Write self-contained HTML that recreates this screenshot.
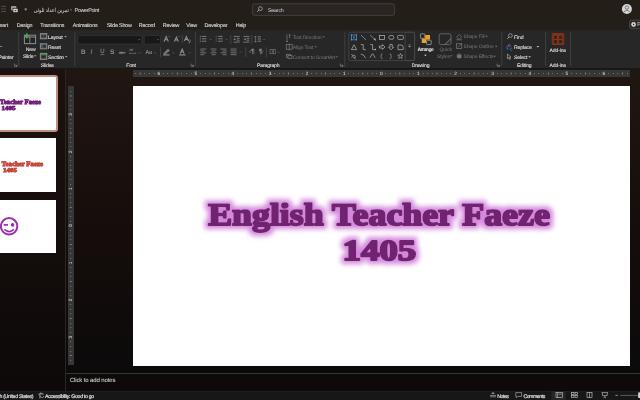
<!DOCTYPE html>
<html><head><meta charset="utf-8">
<style>
*{margin:0;padding:0;box-sizing:border-box}
html,body{width:640px;height:400px;overflow:hidden;background:#1a1411;font-family:"Liberation Sans",sans-serif;color:#e8e8e8}
.a{position:absolute}
svg{font-family:"Liberation Sans",sans-serif;will-change:transform;text-rendering:geometricPrecision}
#title{left:0;top:0;width:640px;height:30px;background:#241e19}
#ribbon{left:0;top:30px;width:640px;height:39px;background:#272727;border-bottom:0.5px solid #1a1614}
#canvas{left:66px;top:69px;width:574px;height:304px;background:linear-gradient(#201713,#150d0b 55%,#0b0a0a)}
#left{left:0;top:69px;width:65px;height:322px;background:linear-gradient(#1b120f,#0d0909)}
#sep{left:65px;top:69px;width:1px;height:322px;background:#2c2623}
#notes{left:66px;top:373px;width:574px;height:18px;background:#0e0a0a;border-top:1px solid #3a3433}
#status{left:0;top:391px;width:640px;height:9px;background:#171717;border-top:1px solid #1f1f1f}
#slide{left:133px;top:86px;width:497px;height:280px;background:#fff}
#hruler{left:133px;top:70px;width:497px;height:7px;background:#373737}
#vruler{left:67.5px;top:86px;width:6.5px;height:279px;background:#373737}
.thumb{position:absolute;left:-40px;width:96px;height:54px;background:#fff}
</style></head><body>
<div id="title" class="a"></div>
<div id="ribbon" class="a"></div>
<div id="canvas" class="a"></div>
<div id="left" class="a"></div>
<div id="sep" class="a"></div>
<div id="notes" class="a"></div>
<div id="status" class="a"></div>
<div id="hruler" class="a"></div>
<div id="vruler" class="a"></div>
<div id="slide" class="a"></div>

<svg class="a" style="left:0;top:0" width="640" height="400" viewBox="0 0 640 400">
<!-- title bar -->
<g fill="none">
<line x1="1" y1="6.4" x2="6" y2="6.4" stroke="#5e5854" stroke-width="0.8"/>
<line x1="1" y1="9" x2="6" y2="9" stroke="#5e5854" stroke-width="0.8"/>
<line x1="1" y1="11.5" x2="6" y2="11.5" stroke="#5e5854" stroke-width="0.8"/>
</g>
<rect x="11" y="6" width="5.4" height="4.6" rx="0.8" fill="#9a9693"/>
<rect x="13" y="8.4" width="5" height="4" fill="#dcdad8" stroke="#1f1a16" stroke-width="0.6"/>
<rect x="14.6" y="10.2" width="1.8" height="1" fill="#1f1a16"/>
<path d="M24.2 8.6 h3 l-1.5 2.4 z" fill="#9d9995"/>
<text x="33.8" y="11.8" font-size="5.6" fill="#e4e2e0" textLength="35" lengthAdjust="spacingAndGlyphs">تمرین اعداد ثلوثی</text>
<rect x="70.4" y="9.6" width="1.4" height="0.6" fill="#d8d6d4"/>
<text x="74.4" y="11.8" font-size="5.5" fill="#e4e2e0" letter-spacing="-0.35">PowerPoint</text>
<rect x="252.4" y="3.8" width="142.2" height="11.6" rx="2.4" fill="#2a2522" stroke="#4a4643" stroke-width="0.8"/>
<circle cx="260.4" cy="8.6" r="1.9" fill="none" stroke="#cfcfcf" stroke-width="0.6"/>
<line x1="259.1" y1="9.9" x2="257.2" y2="11.8" stroke="#cfcfcf" stroke-width="0.7"/>
<text x="268" y="11.6" font-size="5.3" fill="#d4d4d4" letter-spacing="-0.2">Search</text>
<circle cx="626.9" cy="9" r="5" fill="#d6d6d6"/>
<circle cx="626.9" cy="7.6" r="1.7" fill="none" stroke="#3a3a3a" stroke-width="0.6"/>
<path d="M623.6 12.2 Q626.9 8.6 630.2 12.2" fill="none" stroke="#3a3a3a" stroke-width="0.6"/>
<rect x="629.6" y="20.2" width="14" height="8.6" rx="2" fill="#2a2522" stroke="#55514e" stroke-width="0.8"/>
<circle cx="633.6" cy="24.5" r="2.4" fill="#d0d0d0"/>
<path d="M633.0 23.4 v2.2 l1.6 -1.1 z" fill="#2a2522"/>
<text x="637.2" y="26.4" font-size="5.3" fill="#e0e0e0">P</text>
<text x="-4.3" y="26.6" font-size="5.4" fill="#e4e2e0" stroke="#e4e2e0" stroke-width="0.06" letter-spacing="-0.2" font-weight="normal" text-anchor="start" >Insert</text>
<text x="16.7" y="26.6" font-size="5.4" fill="#e4e2e0" stroke="#e4e2e0" stroke-width="0.06" letter-spacing="-0.2" font-weight="normal" text-anchor="start" >Design</text>
<text x="40.3" y="26.6" font-size="5.4" fill="#e4e2e0" stroke="#e4e2e0" stroke-width="0.06" letter-spacing="-0.2" font-weight="normal" text-anchor="start" >Transitions</text>
<text x="72.8" y="26.6" font-size="5.4" fill="#e4e2e0" stroke="#e4e2e0" stroke-width="0.06" letter-spacing="-0.2" font-weight="normal" text-anchor="start" >Animations</text>
<text x="106.8" y="26.6" font-size="5.4" fill="#e4e2e0" stroke="#e4e2e0" stroke-width="0.06" letter-spacing="-0.2" font-weight="normal" text-anchor="start" >Slide Show</text>
<text x="138.7" y="26.6" font-size="5.4" fill="#e4e2e0" stroke="#e4e2e0" stroke-width="0.06" letter-spacing="-0.2" font-weight="normal" text-anchor="start" >Record</text>
<text x="162.8" y="26.6" font-size="5.4" fill="#e4e2e0" stroke="#e4e2e0" stroke-width="0.06" letter-spacing="-0.2" font-weight="normal" text-anchor="start" >Review</text>
<text x="186.2" y="26.6" font-size="5.4" fill="#e4e2e0" stroke="#e4e2e0" stroke-width="0.06" letter-spacing="-0.2" font-weight="normal" text-anchor="start" >View</text>
<text x="204.5" y="26.6" font-size="5.4" fill="#e4e2e0" stroke="#e4e2e0" stroke-width="0.06" letter-spacing="-0.2" font-weight="normal" text-anchor="start" >Developer</text>
<text x="235.7" y="26.6" font-size="5.4" fill="#e4e2e0" stroke="#e4e2e0" stroke-width="0.06" letter-spacing="-0.2" font-weight="normal" text-anchor="start" >Help</text>
<text x="-1.6" y="58.6" font-size="5.1" fill="#e2e2e2" stroke="#e2e2e2" stroke-width="0.09" letter-spacing="-0.15" font-weight="normal" text-anchor="start" >Painter</text>
<line x1="0" y1="46.5" x2="2.2" y2="46.5" stroke="#c8c8c8" stroke-width="0.6"/>
<path d="M14.4 63.6 v2.6 h2.6" fill="none" stroke="#9a9a9a" stroke-width="0.5"/>
<path d="M15.4 64.6 l1.6 1.6 M15.6 66.2 h1.4 v-1.4" fill="none" stroke="#9a9a9a" stroke-width="0.5"/>
<line x1="18.7" y1="32" x2="18.7" y2="66" stroke="#454545" stroke-width="0.8"/>
<rect x="24.4" y="35.2" width="11.2" height="8.4" rx="0" fill="#232323" stroke="#8e8e8e" stroke-width="1.0"/>
<line x1="24.4" y1="37.0" x2="35.6" y2="37.0" stroke="#8e8e8e" stroke-width="1.0"/>
<line x1="29.8" y1="37.0" x2="29.8" y2="43.6" stroke="#8e8e8e" stroke-width="0.9"/>
<line x1="26.8" y1="33.2" x2="26.8" y2="38.6" stroke="#4caa55" stroke-width="1.5"/>
<line x1="24.1" y1="35.9" x2="29.5" y2="35.9" stroke="#4caa55" stroke-width="1.5"/>
<text x="25.7" y="51.3" font-size="5.1" fill="#e2e2e2" stroke="#e2e2e2" stroke-width="0.09" letter-spacing="-0.15" font-weight="normal" text-anchor="start" >New</text>
<text x="22.9" y="57.7" font-size="5.1" fill="#e2e2e2" stroke="#e2e2e2" stroke-width="0.09" letter-spacing="-0.15" font-weight="normal" text-anchor="start" >Slide</text>
<path d="M33.900000000000006 55.199999999999996 L35.2 56.699999999999996 L36.5 55.199999999999996 z" fill="#a8a8a8"/>
<rect x="40.4" y="33.6" width="6.4" height="5.2" rx="0" fill="#5a5a5a" stroke="#8a8a8a" stroke-width="1.0"/>
<rect x="41.6" y="35.4" width="1.7" height="1.8" rx="0" fill="#262626"/>
<rect x="43.9" y="35.4" width="1.7" height="1.8" rx="0" fill="#262626"/>
<text x="48.1" y="38.5" font-size="5.1" fill="#e2e2e2" stroke="#e2e2e2" stroke-width="0.09" letter-spacing="-0.15" font-weight="normal" text-anchor="start" >Layout</text>
<path d="M64.2 36.0 L65.5 37.5 L66.8 36.0 z" fill="#a8a8a8"/>
<rect x="40.4" y="43.8" width="6.4" height="5.0" rx="0" fill="#4a4a4a" stroke="#8a8a8a" stroke-width="1.0"/>
<rect x="42.2" y="45.6" width="3.4" height="1.6" rx="0" fill="#262626"/>
<path d="M40.6 44.6 q0.8 -1.6 2.2 -0.6" fill="none" stroke="#3b8fe0" stroke-width="0.9"/>
<path d="M41.6 45.4 l1.2 1.4" fill="none" stroke="#3b8fe0" stroke-width="0.9"/>
<text x="48.1" y="48.5" font-size="5.1" fill="#e2e2e2" stroke="#e2e2e2" stroke-width="0.09" letter-spacing="-0.15" font-weight="normal" text-anchor="start" >Reset</text>
<rect x="40.4" y="53.8" width="6.4" height="5.6" rx="0" fill="#4a4a4a" stroke="#8a8a8a" stroke-width="1.0"/>
<line x1="39.9" y1="53.6" x2="47.3" y2="53.6" stroke="#4caa55" stroke-width="1.4"/>
<rect x="41.8" y="55.8" width="3.6" height="1.8" rx="0" fill="#262626"/>
<text x="48.1" y="58.5" font-size="5.1" fill="#e2e2e2" stroke="#e2e2e2" stroke-width="0.09" letter-spacing="-0.15" font-weight="normal" text-anchor="start" >Section</text>
<path d="M64.9 56.0 L66.2 57.5 L67.5 56.0 z" fill="#a8a8a8"/>
<text x="40.8" y="67.1" font-size="5.1" fill="#e2e2e2" stroke="#e2e2e2" stroke-width="0.09" letter-spacing="-0.15" font-weight="normal" text-anchor="start" >Slides</text>
<line x1="74.8" y1="32" x2="74.8" y2="66" stroke="#454545" stroke-width="0.8"/>
<rect x="78" y="35.6" width="63.8" height="8.4" rx="1.4" fill="#181818" stroke="#3a3a3a" stroke-width="0.6"/>
<line x1="138.4" y1="39.6" x2="140" y2="39.6" stroke="#888" stroke-width="0.6"/>
<rect x="144.2" y="35.6" width="16.2" height="8.4" rx="1.4" fill="#181818" stroke="#3a3a3a" stroke-width="0.6"/>
<line x1="157.2" y1="39.6" x2="158.8" y2="39.6" stroke="#888" stroke-width="0.6"/>
<path d="M164 41.6 L166.2 36.6 L168.4 41.6 M164.8 39.800000000000004 H167.6" fill="none" stroke="#909090" stroke-width="1.05"/>
<path d="M168.6 36.4 h1.6" fill="none" stroke="#909090" stroke-width="0.5"/>
<path d="M174.4 41.6 L176.38 37.1 L178.36 41.6 M175.12 39.980000000000004 H177.64000000000001" fill="none" stroke="#909090" stroke-width="1.05"/>
<path d="M178.4 36.4 h1.4" fill="none" stroke="#909090" stroke-width="0.5"/>
<line x1="182.4" y1="35.2" x2="182.4" y2="43.2" stroke="#555" stroke-width="0.6"/>
<path d="M184.4 41 L186.38 36.5 L188.36 41 M185.12 39.38 H187.64000000000001" fill="none" stroke="#909090" stroke-width="1.05"/>
<path d="M187.8 40.4 q1.8 -1.2 2.8 0.6 q-0.6 1.6 -2 1.4 M189.4 42 v1.4" fill="none" stroke="#909090" stroke-width="0.7"/>
<text x="81" y="54" font-size="6.4" fill="#8e8e8e" stroke="#8e8e8e" stroke-width="0" letter-spacing="0" font-weight="bold" text-anchor="start" >B</text>
<text x="90.6" y="54" font-size="6.4" fill="#8e8e8e" stroke="#8e8e8e" stroke-width="0.09" letter-spacing="0" font-weight="normal" text-anchor="start" font-style="italic">I</text>
<text x="100.2" y="53.4" font-size="6.0" fill="#8e8e8e" stroke="#8e8e8e" stroke-width="0.09" letter-spacing="0" font-weight="normal" text-anchor="start" >U</text>
<line x1="100.2" y1="54.6" x2="104.4" y2="54.6" stroke="#8e8e8e" stroke-width="0.6"/>
<text x="110" y="54" font-size="6.6" fill="#8e8e8e" stroke="#8e8e8e" stroke-width="0" letter-spacing="0" font-weight="bold" text-anchor="start" >S</text>
<text x="119.0" y="53.8" font-size="3.8" fill="#8e8e8e" stroke="#8e8e8e" stroke-width="0.09" letter-spacing="-0.25" font-weight="normal" text-anchor="start" >abc</text>
<line x1="118.8" y1="52.4" x2="125.6" y2="52.4" stroke="#8e8e8e" stroke-width="0.6"/>
<text x="129.2" y="51.4" font-size="3.4" fill="#8e8e8e" stroke="#8e8e8e" stroke-width="0.09" letter-spacing="-0.1" font-weight="normal" text-anchor="start" >AV</text>
<path d="M129.2 53.4 h7 M129.2 53.4 l1 -0.8 M136.2 53.4 l-1 -0.8" fill="none" stroke="#8e8e8e" stroke-width="0.5"/>
<path d="M138.5 52.3 L139.6 53.4 L140.7 52.3" fill="none" stroke="#707070" stroke-width="0.5"/>
<text x="145.4" y="54" font-size="5.6" fill="#8e8e8e" stroke="#8e8e8e" stroke-width="0.09" letter-spacing="-0.2" font-weight="normal" text-anchor="start" >Aa</text>
<path d="M154.1 52.3 L155.2 53.4 L156.29999999999998 52.3" fill="none" stroke="#707070" stroke-width="0.5"/>
<line x1="160.6" y1="47.2" x2="160.6" y2="57.2" stroke="#555" stroke-width="0.6"/>
<path d="M163.8 53.4 l4.2 -4.2 l1.4 1.4 l-4.2 3.4 z" fill="#707070" stroke="#909090" stroke-width="0.7"/>
<line x1="163.0" y1="54.9" x2="169.6" y2="54.9" stroke="#8a8a8a" stroke-width="1.2"/>
<path d="M172.3 52.3 L173.4 53.4 L174.5 52.3" fill="none" stroke="#707070" stroke-width="0.5"/>
<path d="M180.2 53.6 L182.17999999999998 49.1 L184.16 53.6 M180.92 51.980000000000004 H183.44" fill="none" stroke="#909090" stroke-width="1.05"/>
<line x1="179.2" y1="54.9" x2="185.6" y2="54.9" stroke="#8a8a8a" stroke-width="1.2"/>
<path d="M188.5 52.3 L189.6 53.4 L190.7 52.3" fill="none" stroke="#707070" stroke-width="0.5"/>
<text x="126.2" y="67.1" font-size="5.1" fill="#e2e2e2" stroke="#e2e2e2" stroke-width="0.09" letter-spacing="-0.15" font-weight="normal" text-anchor="start" >Font</text>
<path d="M191.0 63.6 v2.6 h2.6" fill="none" stroke="#9a9a9a" stroke-width="0.5"/>
<path d="M192.0 64.6 l1.6 1.6 M192.2 66.2 h1.4 v-1.4" fill="none" stroke="#9a9a9a" stroke-width="0.5"/>
<line x1="195.6" y1="32" x2="195.6" y2="66" stroke="#454545" stroke-width="0.8"/>
<rect x="199.8" y="35.9" width="1.0" height="1.0" rx="0" fill="#909090"/>
<line x1="201.8" y1="36.4" x2="206.4" y2="36.4" stroke="#909090" stroke-width="0.8"/>
<rect x="199.8" y="38.3" width="1.0" height="1.0" rx="0" fill="#909090"/>
<line x1="201.8" y1="38.8" x2="206.4" y2="38.8" stroke="#909090" stroke-width="0.8"/>
<rect x="199.8" y="40.699999999999996" width="1.0" height="1.0" rx="0" fill="#909090"/>
<line x1="201.8" y1="41.199999999999996" x2="206.4" y2="41.199999999999996" stroke="#909090" stroke-width="0.8"/>
<path d="M209.5 38.9 L210.6 40.0 L211.7 38.9" fill="none" stroke="#707070" stroke-width="0.5"/>
<line x1="216.2" y1="35.8" x2="216.2" y2="37.0" stroke="#909090" stroke-width="0.6"/>
<line x1="218.2" y1="36.4" x2="222.6" y2="36.4" stroke="#909090" stroke-width="0.8"/>
<line x1="216.2" y1="38.199999999999996" x2="216.2" y2="39.4" stroke="#909090" stroke-width="0.6"/>
<line x1="218.2" y1="38.8" x2="222.6" y2="38.8" stroke="#909090" stroke-width="0.8"/>
<line x1="216.2" y1="40.599999999999994" x2="216.2" y2="41.8" stroke="#909090" stroke-width="0.6"/>
<line x1="218.2" y1="41.199999999999996" x2="222.6" y2="41.199999999999996" stroke="#909090" stroke-width="0.8"/>
<path d="M225.5 38.9 L226.6 40.0 L227.7 38.9" fill="none" stroke="#707070" stroke-width="0.5"/>
<line x1="230.8" y1="35" x2="230.8" y2="43.8" stroke="#555" stroke-width="0.6"/>
<line x1="233.6" y1="36.4" x2="239.6" y2="36.4" stroke="#909090" stroke-width="0.75"/>
<line x1="236.79999999999998" y1="38.3" x2="239.6" y2="38.3" stroke="#909090" stroke-width="0.75"/>
<line x1="236.79999999999998" y1="40.199999999999996" x2="239.6" y2="40.199999999999996" stroke="#909090" stroke-width="0.75"/>
<line x1="233.6" y1="42.1" x2="239.6" y2="42.1" stroke="#909090" stroke-width="0.75"/>
<line x1="233.79999999999998" y1="39.25" x2="236.2" y2="39.25" stroke="#909090" stroke-width="0.6"/>
<path d="M233.6 39.25 l1.3 -1.0 v2.0 z" fill="#909090"/>
<line x1="243.4" y1="36.4" x2="249.4" y2="36.4" stroke="#909090" stroke-width="0.75"/>
<line x1="246.6" y1="38.3" x2="249.4" y2="38.3" stroke="#909090" stroke-width="0.75"/>
<line x1="246.6" y1="40.199999999999996" x2="249.4" y2="40.199999999999996" stroke="#909090" stroke-width="0.75"/>
<line x1="243.4" y1="42.1" x2="249.4" y2="42.1" stroke="#909090" stroke-width="0.75"/>
<line x1="243.6" y1="39.25" x2="246.0" y2="39.25" stroke="#909090" stroke-width="0.6"/>
<path d="M246.20000000000002 39.25 l-1.3 -1.0 v2.0 z" fill="#909090"/>
<line x1="251.8" y1="35" x2="251.8" y2="43.8" stroke="#555" stroke-width="0.6"/>
<path d="M255.4 36.2 v6 M254.4 37.2 l1 -1 l1 1 M254.4 41.2 l1 1 l1 -1" fill="none" stroke="#909090" stroke-width="0.6"/>
<line x1="257.6" y1="36.8" x2="261" y2="36.8" stroke="#909090" stroke-width="0.8"/>
<line x1="257.6" y1="39.0" x2="261" y2="39.0" stroke="#909090" stroke-width="0.8"/>
<line x1="257.6" y1="41.199999999999996" x2="261" y2="41.199999999999996" stroke="#909090" stroke-width="0.8"/>
<path d="M263.09999999999997 38.9 L264.2 40.0 L265.3 38.9" fill="none" stroke="#707070" stroke-width="0.5"/>
<line x1="200.4" y1="49.0" x2="206.4" y2="49.0" stroke="#909090" stroke-width="0.7"/>
<line x1="200.4" y1="50.9" x2="204.4" y2="50.9" stroke="#909090" stroke-width="0.7"/>
<line x1="200.4" y1="52.8" x2="206.4" y2="52.8" stroke="#909090" stroke-width="0.7"/>
<line x1="200.4" y1="54.7" x2="204.4" y2="54.7" stroke="#909090" stroke-width="0.7"/>
<line x1="210.6" y1="49.0" x2="216.6" y2="49.0" stroke="#909090" stroke-width="0.7"/>
<line x1="211.6" y1="50.9" x2="215.6" y2="50.9" stroke="#909090" stroke-width="0.7"/>
<line x1="210.6" y1="52.8" x2="216.6" y2="52.8" stroke="#909090" stroke-width="0.7"/>
<line x1="211.6" y1="54.7" x2="215.6" y2="54.7" stroke="#909090" stroke-width="0.7"/>
<line x1="220.6" y1="49.0" x2="226.6" y2="49.0" stroke="#909090" stroke-width="0.7"/>
<line x1="222.6" y1="50.9" x2="226.6" y2="50.9" stroke="#909090" stroke-width="0.7"/>
<line x1="220.6" y1="52.8" x2="226.6" y2="52.8" stroke="#909090" stroke-width="0.7"/>
<line x1="222.6" y1="54.7" x2="226.6" y2="54.7" stroke="#909090" stroke-width="0.7"/>
<line x1="230.6" y1="49.0" x2="236.6" y2="49.0" stroke="#909090" stroke-width="0.7"/>
<line x1="230.6" y1="50.9" x2="236.6" y2="50.9" stroke="#909090" stroke-width="0.7"/>
<line x1="230.6" y1="52.8" x2="236.6" y2="52.8" stroke="#909090" stroke-width="0.7"/>
<line x1="230.6" y1="54.7" x2="236.6" y2="54.7" stroke="#909090" stroke-width="0.7"/>
<path d="M239.3 51.7 L240.4 52.800000000000004 L241.5 51.7" fill="none" stroke="#707070" stroke-width="0.5"/>
<line x1="245.8" y1="47.2" x2="245.8" y2="57" stroke="#555" stroke-width="0.6"/>
<path d="M249.2 51.6 l1.6 -1.2 M249.2 51.6 l1.6 1.2" fill="none" stroke="#909090" stroke-width="0.6"/>
<path d="M251.6 49 h2.2 v5.2 M252.6 49 v5.2" fill="none" stroke="#909090" stroke-width="0.6"/>
<rect x="251.4" y="49.2" width="1.4" height="2" rx="0" fill="#909090"/>
<path d="M259.4 49 h2.2 v5.2 M260.4 49 v5.2" fill="none" stroke="#909090" stroke-width="0.6"/>
<rect x="259.2" y="49.2" width="1.4" height="2" rx="0" fill="#909090"/>
<path d="M263 51.6 l-1 -1.0 M263 51.6 l-1 1.0" fill="none" stroke="#909090" stroke-width="0.6"/>
<line x1="266.4" y1="47.2" x2="266.4" y2="57" stroke="#555" stroke-width="0.6"/>
<rect x="270" y="49.4" width="2.2" height="4.4" rx="0" fill="none" stroke="#7a7a7a" stroke-width="0.6"/>
<rect x="273.4" y="49.4" width="2.2" height="4.4" rx="0" fill="none" stroke="#7a7a7a" stroke-width="0.6"/>
<path d="M277.5 51.7 L278.6 52.800000000000004 L279.70000000000005 51.7" fill="none" stroke="#707070" stroke-width="0.5"/>
<path d="M287 34.4 v7.6 M286 41 l1 1 l1 -1 M289.6 34.4 v4 M288.8 35.4 l0.8 -1 l0.8 1" fill="none" stroke="#8a8a8a" stroke-width="0.6"/>
<text x="292.8" y="38.6" font-size="5.1" fill="#767676" stroke="#767676" stroke-width="0" letter-spacing="-0.15" font-weight="normal" text-anchor="start" >Text Direction</text>
<path d="M322.3 36.199999999999996 L323.6 37.699999999999996 L324.90000000000003 36.199999999999996 z" fill="#6a6a6a"/>
<rect x="286.2" y="44.6" width="6" height="4.6" rx="0" fill="none" stroke="#8a8a8a" stroke-width="0.6"/>
<line x1="289.2" y1="43.6" x2="289.2" y2="50.2" stroke="#8a8a8a" stroke-width="0.6"/>
<text x="292.8" y="48.6" font-size="5.1" fill="#767676" stroke="#767676" stroke-width="0" letter-spacing="-0.15" font-weight="normal" text-anchor="start" >Align Text</text>
<path d="M314.5 46.199999999999996 L315.8 47.699999999999996 L317.1 46.199999999999996 z" fill="#6a6a6a"/>
<rect x="286.4" y="54.2" width="4" height="3" rx="0" fill="none" stroke="#8a8a8a" stroke-width="0.6"/>
<rect x="288" y="55.6" width="4" height="3" rx="0" fill="#2a2a2a" stroke="#8a8a8a" stroke-width="0.6"/>
<text x="292.8" y="58.6" font-size="5.1" fill="#767676" stroke="#767676" stroke-width="0" letter-spacing="-0.15" font-weight="normal" text-anchor="start" >Convert to SmartArt</text>
<path d="M335.5 56.199999999999996 L336.8 57.699999999999996 L338.1 56.199999999999996 z" fill="#6a6a6a"/>
<text x="257.0" y="67.1" font-size="5.1" fill="#e2e2e2" stroke="#e2e2e2" stroke-width="0.09" letter-spacing="-0.15" font-weight="normal" text-anchor="start" >Paragraph</text>
<path d="M340.4 63.6 v2.6 h2.6" fill="none" stroke="#9a9a9a" stroke-width="0.5"/>
<path d="M341.4 64.6 l1.6 1.6 M341.59999999999997 66.2 h1.4 v-1.4" fill="none" stroke="#9a9a9a" stroke-width="0.5"/>
<line x1="344.8" y1="32" x2="344.8" y2="67" stroke="#454545" stroke-width="0.8"/>
<rect x="348.8" y="32.2" width="65.8" height="28.4" rx="2" fill="none" stroke="#4e4e4e" stroke-width="0.7"/>
<rect x="405.2" y="32.2" width="9.4" height="28.4" rx="1.5" fill="none" stroke="#4e4e4e" stroke-width="0.7"/>
<path d="M408.3 44.9 h2.6" fill="none" stroke="#aaaaaa" stroke-width="0.5"/>
<path d="M408.3 46.0 h2.6 l-1.3 1.5 z" fill="#aaaaaa"/>
<rect x="351.4" y="35.0" width="5" height="4.8" rx="0" fill="none" stroke="#4aa0e6" stroke-width="0.7"/>
<rect x="353.2" y="36.6" width="1.4" height="1.6" rx="0" fill="#4aa0e6"/>
<rect x="350.79999999999995" y="34.4" width="1.2" height="1.2" rx="0" fill="#4aa0e6"/>
<rect x="355.79999999999995" y="34.4" width="1.2" height="1.2" rx="0" fill="#4aa0e6"/>
<rect x="350.79999999999995" y="39.199999999999996" width="1.2" height="1.2" rx="0" fill="#4aa0e6"/>
<rect x="355.79999999999995" y="39.199999999999996" width="1.2" height="1.2" rx="0" fill="#4aa0e6"/>
<line x1="361" y1="35" x2="366" y2="40" stroke="#b8b8b8" stroke-width="0.6"/>
<line x1="370.2" y1="35" x2="375.4" y2="40" stroke="#b8b8b8" stroke-width="0.6"/>
<path d="M374 39.6 l1.6 0.6 l-0.6 -1.6 z" fill="#b8b8b8" stroke="#b8b8b8" stroke-width="0.5"/>
<rect x="379.4" y="35.4" width="5.2" height="4" rx="0" fill="none" stroke="#b8b8b8" stroke-width="0.7"/>
<path d="M388.6 37.4 l1 -1.8 h3.4 l1 1.8 l-1 1.8 h-3.4 z" fill="none" stroke="#b8b8b8" stroke-width="0.7"/>
<rect x="397.6" y="35.4" width="5.8" height="4" rx="1" fill="none" stroke="#b8b8b8" stroke-width="0.7"/>
<path d="M351.4 49.6 l2.6 -4.8 l2.6 4.8 z" fill="none" stroke="#b8b8b8" stroke-width="0.7"/>
<path d="M360.8 44.6 h2.4 v5 h2.6" fill="none" stroke="#b8b8b8" stroke-width="0.7"/>
<path d="M370.2 44.6 h2.4 v5 h2.6" fill="none" stroke="#b8b8b8" stroke-width="0.7"/>
<rect x="374.8" y="48.8" width="1.2" height="1.4" rx="0" fill="#b8b8b8"/>
<path d="M379.4 46 h3 v-1.4 l2.6 2.4 l-2.6 2.4 v-1.4 h-3 z" fill="none" stroke="#b8b8b8" stroke-width="0.7"/>
<path d="M390 44.4 h2.2 v2.8 h1.4 l-2.5 2.6 l-2.5 -2.6 h1.4 z" fill="none" stroke="#b8b8b8" stroke-width="0.7"/>
<path d="M398 49.6 v-4.6 h3 q2.2 0 2.2 2.2 v2.4 z" fill="none" stroke="#b8b8b8" stroke-width="0.7"/>
<path d="M351.4 54 l2.4 2.6 M351.6 57.6 q1.4 -3.4 3 -2.4 q1.6 1 0.4 2.6 q-1 0.8 -1.6 -0.4 l2.4 1.8" fill="none" stroke="#b8b8b8" stroke-width="0.6"/>
<path d="M360.8 54.2 q3.6 0 4.8 4" fill="none" stroke="#b8b8b8" stroke-width="0.7"/>
<path d="M370 57.8 l2 -3.6 q0.6 -0.6 1.2 0 l2 3.6" fill="none" stroke="#b8b8b8" stroke-width="0.7"/>
<path d="M382.4 53.8 q-1.2 0 -1.2 1.2 v0.6 l-0.6 0.6 l0.6 0.6 v0.6 q0 1.2 1.2 1.2" fill="none" stroke="#b8b8b8" stroke-width="0.6"/>
<path d="M389.8 53.8 q1.2 0 1.2 1.2 v0.6 l0.6 0.6 l-0.6 0.6 v0.6 q0 1.2 -1.2 1.2" fill="none" stroke="#b8b8b8" stroke-width="0.6"/>
<path d="M400.40 53.40 L401.11 55.23 L403.06 55.33 L401.54 56.57 L402.05 58.47 L400.40 57.40 L398.75 58.47 L399.26 56.57 L397.74 55.33 L399.69 55.23 z" fill="none" stroke="#b8b8b8" stroke-width="0.6"/>
<rect x="420.4" y="33.8" width="4.4" height="4.6" rx="0.6" fill="#262626" stroke="#a8a8a8" stroke-width="0.75"/>
<rect x="425.2" y="35.0" width="4.8" height="4.6" rx="0" fill="#eaa22a"/>
<rect x="421.8" y="38.8" width="4.4" height="4.2" rx="0" fill="#eaa22a"/>
<rect x="426.6" y="40.3" width="4.6" height="4.3" rx="0.6" fill="#262626" stroke="#a8a8a8" stroke-width="0.75"/>
<text x="417.4" y="51.2" font-size="5.0" fill="#eeeeee" stroke="#eeeeee" stroke-width="0" letter-spacing="-0.45" font-weight="bold" text-anchor="start" >Arrange</text>
<path d="M424.09999999999997 54.8 L425.4 56.3 L426.7 54.8 z" fill="#cfcfcf"/>
<rect x="439.2" y="33.8" width="11.8" height="10.8" rx="1.6" fill="none" stroke="#7c7c7c" stroke-width="0.7"/>
<path d="M444.6 44.4 l6.4 -6.4 M446 44.4 l5 -5" fill="none" stroke="#7c7c7c" stroke-width="0.6"/>
<text x="439.4" y="51.1" font-size="5.1" fill="#767676" stroke="#767676" stroke-width="0" letter-spacing="-0.1" font-weight="normal" text-anchor="start" >Quick</text>
<text x="437.0" y="57.6" font-size="5.1" fill="#767676" stroke="#767676" stroke-width="0" letter-spacing="-0.1" font-weight="normal" text-anchor="start" >Styles</text>
<path d="M450.09999999999997 55.199999999999996 L451.4 56.699999999999996 L452.7 55.199999999999996 z" fill="#6a6a6a"/>
<path d="M456.6 37.2 l2.6 -2.8 l2.4 2.4 l-2.6 2.6 z M456.2 39.8 h5.8" fill="none" stroke="#8a8a8a" stroke-width="0.6"/>
<text x="463.4" y="38.0" font-size="5.1" fill="#767676" stroke="#767676" stroke-width="0" letter-spacing="-0.15" font-weight="normal" text-anchor="start" >Shape Fill</text>
<path d="M485.3 35.8 L486.6 37.3 L487.90000000000003 35.8 z" fill="#7a7a7a"/>
<rect x="456.4" y="43.8" width="5.4" height="4.8" rx="0" fill="none" stroke="#8a8a8a" stroke-width="0.6"/>
<path d="M458 47.2 l3.6 -3.6" fill="none" stroke="#8a8a8a" stroke-width="0.6"/>
<text x="463.4" y="48.0" font-size="5.1" fill="#767676" stroke="#767676" stroke-width="0" letter-spacing="-0.15" font-weight="normal" text-anchor="start" >Shape Outline</text>
<path d="M494.9 45.8 L496.2 47.3 L497.5 45.8 z" fill="#7a7a7a"/>
<circle cx="459.2" cy="56.0" r="2.5" fill="#747474"/>
<path d="M456.8 55.2 q2.4 -2 4.8 0" fill="none" stroke="#3a3a3a" stroke-width="0.6"/>
<text x="463.4" y="58.0" font-size="5.1" fill="#767676" stroke="#767676" stroke-width="0" letter-spacing="-0.15" font-weight="normal" text-anchor="start" >Shape Effects</text>
<path d="M493.3 55.8 L494.6 57.3 L495.90000000000003 55.8 z" fill="#7a7a7a"/>
<text x="411.8" y="67.1" font-size="5.1" fill="#e2e2e2" stroke="#e2e2e2" stroke-width="0.09" letter-spacing="-0.15" font-weight="normal" text-anchor="start" >Drawing</text>
<path d="M497.0 63.6 v2.6 h2.6" fill="none" stroke="#9a9a9a" stroke-width="0.5"/>
<path d="M498.0 64.6 l1.6 1.6 M498.2 66.2 h1.4 v-1.4" fill="none" stroke="#9a9a9a" stroke-width="0.5"/>
<line x1="501.8" y1="32" x2="501.8" y2="66" stroke="#454545" stroke-width="0.8"/>
<circle cx="510.4" cy="35.6" r="1.9" fill="none" stroke="#c8c8c8" stroke-width="0.6"/>
<line x1="509" y1="37" x2="507.2" y2="38.8" stroke="#c8c8c8" stroke-width="0.7"/>
<text x="514.0" y="38.8" font-size="5.1" fill="#e2e2e2" stroke="#e2e2e2" stroke-width="0.09" letter-spacing="-0.15" font-weight="normal" text-anchor="start" >Find</text>
<circle cx="509.6" cy="45.6" r="1.0" fill="none" stroke="#b553c9" stroke-width="0.6"/>
<path d="M508.6 44.2 v2.4" fill="none" stroke="#b553c9" stroke-width="0.6"/>
<path d="M507.6 45.8 q-1.4 1.6 0 3.4" fill="none" stroke="#3d8fd8" stroke-width="0.7"/>
<path d="M507.0 48.6 l0.8 0.7 l0.3 -1" fill="none" stroke="#3d8fd8" stroke-width="0.5"/>
<path d="M512.2 48.4 a1.1 1.1 0 1 0 0 1.6" fill="none" stroke="#3d8fd8" stroke-width="0.6"/>
<text x="514.0" y="48.8" font-size="5.1" fill="#e2e2e2" stroke="#e2e2e2" stroke-width="0.09" letter-spacing="-0.15" font-weight="normal" text-anchor="start" >Replace</text>
<path d="M536.6 46.0 L537.9 47.5 L539.1999999999999 46.0 z" fill="#cfcfcf"/>
<path d="M507.4 54 v4.8 l1.2 -1.2 l1 2 l0.8 -0.4 l-1 -2 h1.6 z" fill="none" stroke="#c8c8c8" stroke-width="0.55"/>
<text x="514.0" y="58.8" font-size="5.1" fill="#e2e2e2" stroke="#e2e2e2" stroke-width="0.09" letter-spacing="-0.15" font-weight="normal" text-anchor="start" >Select</text>
<path d="M528.3000000000001 56.199999999999996 L529.6 57.699999999999996 L530.9 56.199999999999996 z" fill="#cfcfcf"/>
<text x="517.0" y="67.1" font-size="5.1" fill="#e2e2e2" stroke="#e2e2e2" stroke-width="0.09" letter-spacing="-0.15" font-weight="normal" text-anchor="start" >Editing</text>
<line x1="545.6" y1="32" x2="545.6" y2="66" stroke="#454545" stroke-width="0.8"/>
<rect x="551.8" y="32.9" width="12.4" height="12" rx="1.2" fill="#8a3318"/>
<rect x="552.9" y="34.0" width="10.2" height="9.8" rx="0" fill="none" stroke="#5a2414" stroke-width="0.35"/>
<rect x="553.9" y="35.8" width="3.2" height="3.0" rx="0" fill="#2e2623"/>
<rect x="559.0" y="35.8" width="3.2" height="3.0" rx="0" fill="#2e2623"/>
<rect x="553.9" y="40.1" width="3.2" height="3.0" rx="0" fill="#2e2623"/>
<rect x="559.0" y="40.1" width="3.2" height="3.0" rx="0" fill="#2e2623"/>
<text x="549.6" y="51.6" font-size="5.1" fill="#e2e2e2" stroke="#e2e2e2" stroke-width="0.09" letter-spacing="-0.15" font-weight="normal" text-anchor="start" >Add-ins</text>
<text x="549.6" y="67.1" font-size="5.1" fill="#e2e2e2" stroke="#e2e2e2" stroke-width="0.09" letter-spacing="-0.15" font-weight="normal" text-anchor="start" >Add-ins</text>
<line x1="570.6" y1="32" x2="570.6" y2="66" stroke="#454545" stroke-width="0.8"/>
<text x="158.70" y="75.2" font-size="4.7" fill="#e6e6e6" text-anchor="middle">6</text>
<text x="195.80" y="75.2" font-size="4.7" fill="#e6e6e6" text-anchor="middle">5</text>
<text x="232.90" y="75.2" font-size="4.7" fill="#e6e6e6" text-anchor="middle">4</text>
<text x="270.00" y="75.2" font-size="4.7" fill="#e6e6e6" text-anchor="middle">3</text>
<text x="307.10" y="75.2" font-size="4.7" fill="#e6e6e6" text-anchor="middle">2</text>
<text x="344.20" y="75.2" font-size="4.7" fill="#e6e6e6" text-anchor="middle">1</text>
<text x="381.30" y="75.2" font-size="4.7" fill="#e6e6e6" text-anchor="middle">0</text>
<text x="418.40" y="75.2" font-size="4.7" fill="#e6e6e6" text-anchor="middle">1</text>
<text x="455.50" y="75.2" font-size="4.7" fill="#e6e6e6" text-anchor="middle">2</text>
<text x="492.60" y="75.2" font-size="4.7" fill="#e6e6e6" text-anchor="middle">3</text>
<text x="529.70" y="75.2" font-size="4.7" fill="#e6e6e6" text-anchor="middle">4</text>
<text x="566.80" y="75.2" font-size="4.7" fill="#e6e6e6" text-anchor="middle">5</text>
<text x="603.90" y="75.2" font-size="4.7" fill="#e6e6e6" text-anchor="middle">6</text>
<circle cx="135.50" cy="73.5" r="0.48" fill="#a0a0a0"/>
<rect x="139.80" y="72.6" width="0.7" height="1.8" fill="#a8a8a8"/>
<circle cx="144.50" cy="73.5" r="0.48" fill="#a0a0a0"/>
<circle cx="149.50" cy="73.5" r="0.48" fill="#a0a0a0"/>
<circle cx="154.50" cy="73.5" r="0.48" fill="#a0a0a0"/>
<circle cx="163.50" cy="73.5" r="0.48" fill="#a0a0a0"/>
<circle cx="167.50" cy="73.5" r="0.48" fill="#a0a0a0"/>
<circle cx="172.50" cy="73.5" r="0.48" fill="#a0a0a0"/>
<rect x="176.90" y="72.6" width="0.7" height="1.8" fill="#a8a8a8"/>
<circle cx="181.50" cy="73.5" r="0.48" fill="#a0a0a0"/>
<circle cx="186.50" cy="73.5" r="0.48" fill="#a0a0a0"/>
<circle cx="191.50" cy="73.5" r="0.48" fill="#a0a0a0"/>
<circle cx="200.50" cy="73.5" r="0.48" fill="#a0a0a0"/>
<circle cx="205.50" cy="73.5" r="0.48" fill="#a0a0a0"/>
<circle cx="209.50" cy="73.5" r="0.48" fill="#a0a0a0"/>
<rect x="214.00" y="72.6" width="0.7" height="1.8" fill="#a8a8a8"/>
<circle cx="218.50" cy="73.5" r="0.48" fill="#a0a0a0"/>
<circle cx="223.50" cy="73.5" r="0.48" fill="#a0a0a0"/>
<circle cx="228.50" cy="73.5" r="0.48" fill="#a0a0a0"/>
<circle cx="237.50" cy="73.5" r="0.48" fill="#a0a0a0"/>
<circle cx="242.50" cy="73.5" r="0.48" fill="#a0a0a0"/>
<circle cx="246.50" cy="73.5" r="0.48" fill="#a0a0a0"/>
<rect x="251.10" y="72.6" width="0.7" height="1.8" fill="#a8a8a8"/>
<circle cx="256.50" cy="73.5" r="0.48" fill="#a0a0a0"/>
<circle cx="260.50" cy="73.5" r="0.48" fill="#a0a0a0"/>
<circle cx="265.50" cy="73.5" r="0.48" fill="#a0a0a0"/>
<circle cx="274.50" cy="73.5" r="0.48" fill="#a0a0a0"/>
<circle cx="279.50" cy="73.5" r="0.48" fill="#a0a0a0"/>
<circle cx="283.50" cy="73.5" r="0.48" fill="#a0a0a0"/>
<rect x="288.20" y="72.6" width="0.7" height="1.8" fill="#a8a8a8"/>
<circle cx="293.50" cy="73.5" r="0.48" fill="#a0a0a0"/>
<circle cx="297.50" cy="73.5" r="0.48" fill="#a0a0a0"/>
<circle cx="302.50" cy="73.5" r="0.48" fill="#a0a0a0"/>
<circle cx="311.50" cy="73.5" r="0.48" fill="#a0a0a0"/>
<circle cx="316.50" cy="73.5" r="0.48" fill="#a0a0a0"/>
<circle cx="321.50" cy="73.5" r="0.48" fill="#a0a0a0"/>
<rect x="325.30" y="72.6" width="0.7" height="1.8" fill="#a8a8a8"/>
<circle cx="330.50" cy="73.5" r="0.48" fill="#a0a0a0"/>
<circle cx="334.50" cy="73.5" r="0.48" fill="#a0a0a0"/>
<circle cx="339.50" cy="73.5" r="0.48" fill="#a0a0a0"/>
<circle cx="348.50" cy="73.5" r="0.48" fill="#a0a0a0"/>
<circle cx="353.50" cy="73.5" r="0.48" fill="#a0a0a0"/>
<circle cx="358.50" cy="73.5" r="0.48" fill="#a0a0a0"/>
<rect x="362.40" y="72.6" width="0.7" height="1.8" fill="#a8a8a8"/>
<circle cx="367.50" cy="73.5" r="0.48" fill="#a0a0a0"/>
<circle cx="372.50" cy="73.5" r="0.48" fill="#a0a0a0"/>
<circle cx="376.50" cy="73.5" r="0.48" fill="#a0a0a0"/>
<circle cx="385.50" cy="73.5" r="0.48" fill="#a0a0a0"/>
<circle cx="390.50" cy="73.5" r="0.48" fill="#a0a0a0"/>
<circle cx="395.50" cy="73.5" r="0.48" fill="#a0a0a0"/>
<rect x="399.50" y="72.6" width="0.7" height="1.8" fill="#a8a8a8"/>
<circle cx="404.50" cy="73.5" r="0.48" fill="#a0a0a0"/>
<circle cx="409.50" cy="73.5" r="0.48" fill="#a0a0a0"/>
<circle cx="413.50" cy="73.5" r="0.48" fill="#a0a0a0"/>
<circle cx="423.50" cy="73.5" r="0.48" fill="#a0a0a0"/>
<circle cx="427.50" cy="73.5" r="0.48" fill="#a0a0a0"/>
<circle cx="432.50" cy="73.5" r="0.48" fill="#a0a0a0"/>
<rect x="436.60" y="72.6" width="0.7" height="1.8" fill="#a8a8a8"/>
<circle cx="441.50" cy="73.5" r="0.48" fill="#a0a0a0"/>
<circle cx="446.50" cy="73.5" r="0.48" fill="#a0a0a0"/>
<circle cx="450.50" cy="73.5" r="0.48" fill="#a0a0a0"/>
<circle cx="460.50" cy="73.5" r="0.48" fill="#a0a0a0"/>
<circle cx="464.50" cy="73.5" r="0.48" fill="#a0a0a0"/>
<circle cx="469.50" cy="73.5" r="0.48" fill="#a0a0a0"/>
<rect x="473.70" y="72.6" width="0.7" height="1.8" fill="#a8a8a8"/>
<circle cx="478.50" cy="73.5" r="0.48" fill="#a0a0a0"/>
<circle cx="483.50" cy="73.5" r="0.48" fill="#a0a0a0"/>
<circle cx="487.50" cy="73.5" r="0.48" fill="#a0a0a0"/>
<circle cx="497.50" cy="73.5" r="0.48" fill="#a0a0a0"/>
<circle cx="501.50" cy="73.5" r="0.48" fill="#a0a0a0"/>
<circle cx="506.50" cy="73.5" r="0.48" fill="#a0a0a0"/>
<rect x="510.80" y="72.6" width="0.7" height="1.8" fill="#a8a8a8"/>
<circle cx="515.50" cy="73.5" r="0.48" fill="#a0a0a0"/>
<circle cx="520.50" cy="73.5" r="0.48" fill="#a0a0a0"/>
<circle cx="525.50" cy="73.5" r="0.48" fill="#a0a0a0"/>
<circle cx="534.50" cy="73.5" r="0.48" fill="#a0a0a0"/>
<circle cx="538.50" cy="73.5" r="0.48" fill="#a0a0a0"/>
<circle cx="543.50" cy="73.5" r="0.48" fill="#a0a0a0"/>
<rect x="547.90" y="72.6" width="0.7" height="1.8" fill="#a8a8a8"/>
<circle cx="552.50" cy="73.5" r="0.48" fill="#a0a0a0"/>
<circle cx="557.50" cy="73.5" r="0.48" fill="#a0a0a0"/>
<circle cx="562.50" cy="73.5" r="0.48" fill="#a0a0a0"/>
<circle cx="571.50" cy="73.5" r="0.48" fill="#a0a0a0"/>
<circle cx="576.50" cy="73.5" r="0.48" fill="#a0a0a0"/>
<circle cx="580.50" cy="73.5" r="0.48" fill="#a0a0a0"/>
<rect x="585.00" y="72.6" width="0.7" height="1.8" fill="#a8a8a8"/>
<circle cx="589.50" cy="73.5" r="0.48" fill="#a0a0a0"/>
<circle cx="594.50" cy="73.5" r="0.48" fill="#a0a0a0"/>
<circle cx="599.50" cy="73.5" r="0.48" fill="#a0a0a0"/>
<circle cx="608.50" cy="73.5" r="0.48" fill="#a0a0a0"/>
<circle cx="613.50" cy="73.5" r="0.48" fill="#a0a0a0"/>
<circle cx="617.50" cy="73.5" r="0.48" fill="#a0a0a0"/>
<rect x="622.10" y="72.6" width="0.7" height="1.8" fill="#a8a8a8"/>
<circle cx="627.50" cy="73.5" r="0.48" fill="#a0a0a0"/>
<text x="0" y="0" font-size="4.7" fill="#e6e6e6" text-anchor="middle" transform="translate(70.75,114.50) rotate(-90) translate(0,1.55)">3</text>
<text x="0" y="0" font-size="4.7" fill="#e6e6e6" text-anchor="middle" transform="translate(70.75,151.60) rotate(-90) translate(0,1.55)">2</text>
<text x="0" y="0" font-size="4.7" fill="#e6e6e6" text-anchor="middle" transform="translate(70.75,188.70) rotate(-90) translate(0,1.55)">1</text>
<text x="0" y="0" font-size="4.7" fill="#e6e6e6" text-anchor="middle" transform="translate(70.75,225.80) rotate(-90) translate(0,1.55)">0</text>
<text x="0" y="0" font-size="4.7" fill="#e6e6e6" text-anchor="middle" transform="translate(70.75,262.90) rotate(-90) translate(0,1.55)">1</text>
<text x="0" y="0" font-size="4.7" fill="#e6e6e6" text-anchor="middle" transform="translate(70.75,300.00) rotate(-90) translate(0,1.55)">2</text>
<text x="0" y="0" font-size="4.7" fill="#e6e6e6" text-anchor="middle" transform="translate(70.75,337.10) rotate(-90) translate(0,1.55)">3</text>
<circle cx="70.75" cy="91.50" r="0.48" fill="#a0a0a0"/>
<rect x="69.85" y="95.60" width="1.8" height="0.7" fill="#a8a8a8"/>
<circle cx="70.75" cy="100.50" r="0.48" fill="#a0a0a0"/>
<circle cx="70.75" cy="105.50" r="0.48" fill="#a0a0a0"/>
<circle cx="70.75" cy="109.50" r="0.48" fill="#a0a0a0"/>
<circle cx="70.75" cy="119.50" r="0.48" fill="#a0a0a0"/>
<circle cx="70.75" cy="123.50" r="0.48" fill="#a0a0a0"/>
<circle cx="70.75" cy="128.50" r="0.48" fill="#a0a0a0"/>
<rect x="69.85" y="132.70" width="1.8" height="0.7" fill="#a8a8a8"/>
<circle cx="70.75" cy="137.50" r="0.48" fill="#a0a0a0"/>
<circle cx="70.75" cy="142.50" r="0.48" fill="#a0a0a0"/>
<circle cx="70.75" cy="146.50" r="0.48" fill="#a0a0a0"/>
<circle cx="70.75" cy="156.50" r="0.48" fill="#a0a0a0"/>
<circle cx="70.75" cy="160.50" r="0.48" fill="#a0a0a0"/>
<circle cx="70.75" cy="165.50" r="0.48" fill="#a0a0a0"/>
<rect x="69.85" y="169.80" width="1.8" height="0.7" fill="#a8a8a8"/>
<circle cx="70.75" cy="174.50" r="0.48" fill="#a0a0a0"/>
<circle cx="70.75" cy="179.50" r="0.48" fill="#a0a0a0"/>
<circle cx="70.75" cy="184.50" r="0.48" fill="#a0a0a0"/>
<circle cx="70.75" cy="193.50" r="0.48" fill="#a0a0a0"/>
<circle cx="70.75" cy="197.50" r="0.48" fill="#a0a0a0"/>
<circle cx="70.75" cy="202.50" r="0.48" fill="#a0a0a0"/>
<rect x="69.85" y="206.90" width="1.8" height="0.7" fill="#a8a8a8"/>
<circle cx="70.75" cy="211.50" r="0.48" fill="#a0a0a0"/>
<circle cx="70.75" cy="216.50" r="0.48" fill="#a0a0a0"/>
<circle cx="70.75" cy="221.50" r="0.48" fill="#a0a0a0"/>
<circle cx="70.75" cy="230.50" r="0.48" fill="#a0a0a0"/>
<circle cx="70.75" cy="235.50" r="0.48" fill="#a0a0a0"/>
<circle cx="70.75" cy="239.50" r="0.48" fill="#a0a0a0"/>
<rect x="69.85" y="244.00" width="1.8" height="0.7" fill="#a8a8a8"/>
<circle cx="70.75" cy="248.50" r="0.48" fill="#a0a0a0"/>
<circle cx="70.75" cy="253.50" r="0.48" fill="#a0a0a0"/>
<circle cx="70.75" cy="258.50" r="0.48" fill="#a0a0a0"/>
<circle cx="70.75" cy="267.50" r="0.48" fill="#a0a0a0"/>
<circle cx="70.75" cy="272.50" r="0.48" fill="#a0a0a0"/>
<circle cx="70.75" cy="276.50" r="0.48" fill="#a0a0a0"/>
<rect x="69.85" y="281.10" width="1.8" height="0.7" fill="#a8a8a8"/>
<circle cx="70.75" cy="286.50" r="0.48" fill="#a0a0a0"/>
<circle cx="70.75" cy="290.50" r="0.48" fill="#a0a0a0"/>
<circle cx="70.75" cy="295.50" r="0.48" fill="#a0a0a0"/>
<circle cx="70.75" cy="304.50" r="0.48" fill="#a0a0a0"/>
<circle cx="70.75" cy="309.50" r="0.48" fill="#a0a0a0"/>
<circle cx="70.75" cy="313.50" r="0.48" fill="#a0a0a0"/>
<rect x="69.85" y="318.20" width="1.8" height="0.7" fill="#a8a8a8"/>
<circle cx="70.75" cy="323.50" r="0.48" fill="#a0a0a0"/>
<circle cx="70.75" cy="327.50" r="0.48" fill="#a0a0a0"/>
<circle cx="70.75" cy="332.50" r="0.48" fill="#a0a0a0"/>
<circle cx="70.75" cy="341.50" r="0.48" fill="#a0a0a0"/>
<circle cx="70.75" cy="346.50" r="0.48" fill="#a0a0a0"/>
<circle cx="70.75" cy="351.50" r="0.48" fill="#a0a0a0"/>
<rect x="69.85" y="355.30" width="1.8" height="0.7" fill="#a8a8a8"/>
<circle cx="70.75" cy="360.50" r="0.48" fill="#a0a0a0"/>
</svg>

<!-- thumbnails -->
<div class="a" style="left:-42px;top:75px;width:100px;height:57px;border:2px solid #c28d7a;border-radius:3px;background:#fff"></div>
<div class="thumb" style="top:137.6px"></div>
<div class="thumb" style="top:200px;height:52.7px"></div>

<svg class="a" style="left:0;top:0" width="640" height="400" viewBox="0 0 640 400">
<defs>
<filter id="glow" x="-10%" y="-60%" width="120%" height="220%">
<feMorphology in="SourceAlpha" operator="dilate" radius="3" result="d"/>
<feGaussianBlur in="d" stdDeviation="2.5" result="b"/>
<feFlood flood-color="#d488dc" flood-opacity="1"/>
<feComposite in2="b" operator="in" result="g"/>
<feMerge><feMergeNode in="g"/><feMergeNode in="SourceGraphic"/></feMerge>
</filter>
<filter id="glow2" x="-10%" y="-60%" width="120%" height="220%">
<feMorphology in="SourceAlpha" operator="dilate" radius="0.4" result="d"/>
<feGaussianBlur in="d" stdDeviation="0.4" result="b"/>
<feFlood flood-color="#c55ccf" flood-opacity="0.6"/>
<feComposite in2="b" operator="in" result="g"/>
<feMerge><feMergeNode in="g"/><feMergeNode in="SourceGraphic"/></feMerge>
</filter>
<clipPath id="lp"><rect x="0" y="69" width="65" height="321"/></clipPath>
</defs>
<g filter="url(#glow)" font-family="Liberation Serif" font-weight="bold" fill="#712271" stroke="#712271" stroke-width="2" stroke-linejoin="round">
<text x="208.2" y="225.4" font-size="31.5" textLength="341.6" lengthAdjust="spacingAndGlyphs">English Teacher Faeze</text>
<text x="342.6" y="259.8" font-size="29" textLength="73.6" lengthAdjust="spacingAndGlyphs">1405</text>
</g>
<g clip-path="url(#lp)" font-family="Liberation Serif" font-weight="bold">
<g filter="url(#glow2)" fill="#6a1a72" stroke="#6a1a72" stroke-width="0.75">
<text x="0" y="103.8" font-size="6.8" textLength="41" lengthAdjust="spacingAndGlyphs">Teacher Faeze</text>
<text x="1.6" y="110.1" font-size="6.0" textLength="14" lengthAdjust="spacingAndGlyphs">1405</text>
</g>
<g filter="url(#glow2)" fill="#c44a14" stroke="#c44a14" stroke-width="0.75">
<text x="1.6" y="165.8" font-size="6.8" textLength="41.4" lengthAdjust="spacingAndGlyphs">Teacher Faeze</text>
<text x="3" y="172.1" font-size="6.0" textLength="13.9" lengthAdjust="spacingAndGlyphs">1405</text>
</g>
<g fill="none" stroke="#9c2dab" stroke-width="2">
<circle cx="9.1" cy="226.3" r="8.2"/>
<path d="M3.6 224.9 h4.4" stroke-width="1.7"/>
<path d="M4.4 229.4 q4.8 4.4 9.4 0" stroke-width="1.7"/>
</g>
<circle cx="12.6" cy="224.9" r="1.8" fill="#9c2dab"/>
</g>
</svg>


<svg class="a" style="left:0;top:0" width="640" height="400" viewBox="0 0 640 400">
<text x="69.8" y="382" font-size="6.0" fill="#e6e6e6" letter-spacing="-0.12">Click to add notes</text>
<text x="-0.6" y="398.4" font-size="5.2" fill="#dadada" stroke="#dadada" stroke-width="0.22" letter-spacing="-0.3">h (United States)</text>
<g fill="none" stroke="#cfcfcf" stroke-width="0.55">
<path d="M38.4 394.2 q2.6 -0.9 5.2 0" stroke-width="0.8"/>
<circle cx="40.9" cy="393.0" r="0.6" fill="#cfcfcf" stroke="none"/>
<path d="M39.9 394.4 v4 M39.9 396.6 h1.2" stroke-width="0.7"/>
<path d="M41.4 397.2 l0.9 0.9 l1.8 -2" stroke-width="0.7"/>
</g>
<text x="45" y="398.4" font-size="5.2" fill="#dadada" stroke="#dadada" stroke-width="0.22" letter-spacing="-0.32">Accessibility: Good to go</text>
<g fill="none" stroke="#cfcfcf" stroke-width="0.55">
<path d="M490 396.8 h6 M490 395.4 h6 M491.8 393.6 h2.4 l-1.2 -1.4 z"/>
<path d="M515.8 392.6 h5.8 v3.8 h-3.8 l-1.4 1.4 v-1.4 h-0.6 z"/>
</g>
<text x="497.2" y="398.4" font-size="5.2" fill="#dadada" stroke="#dadada" stroke-width="0.22" letter-spacing="-0.45">Notes</text>
<text x="523.4" y="398.4" font-size="5.2" fill="#dadada" stroke="#dadada" stroke-width="0.22" letter-spacing="-0.45">Comments</text>
<rect x="551.4" y="391.2" width="14.2" height="8.8" fill="#262626"/>
<g fill="none" stroke="#cfcfcf" stroke-width="0.6">
<rect x="556" y="392.6" width="6.4" height="4.8"/>
<path d="M557.6 392.6 v4.8 M558.6 394.2 h3"/>
<rect x="571.4" y="392.6" width="2.6" height="2"/><rect x="575" y="392.6" width="2.6" height="2"/>
<rect x="571.4" y="395.4" width="2.6" height="2"/><rect x="575" y="395.4" width="2.6" height="2"/>
<rect x="587" y="392.4" width="5" height="5.2"/><path d="M589.5 392.4 v5.2"/>
<path d="M601.6 392.6 h6.4 M602.4 392.6 v3 h4.8 v-3 M604.8 395.6 v1.6 l-1.2 0.8 M604.8 397.2 l1.2 0.8"/>
</g>
<path d="M615.4 395.4 h2.6" stroke="#cfcfcf" stroke-width="0.6"/>
<path d="M620.4 395.4 h20" stroke="#8a8a8a" stroke-width="0.6"/>
<rect x="638.2" y="392.4" width="1.8" height="5.6" fill="#d8d8d8"/>
</svg>
</body></html>
